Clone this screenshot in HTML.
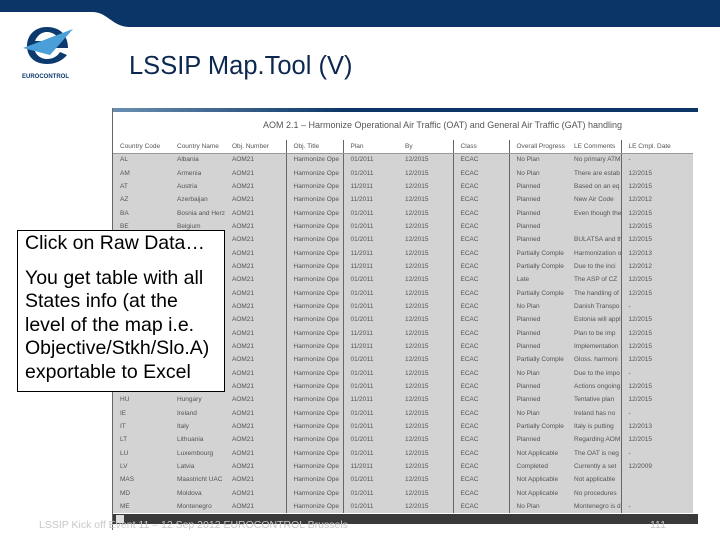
<!DOCTYPE html>
<html><head><meta charset="utf-8"><style>
*{margin:0;padding:0;box-sizing:border-box}
body{width:720px;height:540px;position:relative;overflow:hidden;background:#fff;font-family:"Liberation Sans",sans-serif}
.abs{position:absolute}
#shot{left:112px;top:108px;width:585px;height:422px;background:#fff;border-left:1px solid #666}
table{border-collapse:collapse;position:absolute;left:0;top:32px;width:580px;font-size:6.5px;color:#555;table-layout:fixed}
td{height:13.35px;padding:0 0 0 7px;white-space:nowrap;overflow:hidden;background:#d3d3d3}
tr.h td{background:#fff;height:13px;border-bottom:1px solid #999}
td.b{border-left:1px solid #666}
</style></head><body>
<svg class="abs" style="left:0;top:0" width="720" height="30">
<path d="M0 0H720V27H130C112 27 108 12 92 12H0Z" fill="#0a3566"/>
</svg>
<svg class="abs" style="left:20px;top:25px" width="60" height="60">
<path d="M27 2C14 2 7 11 7 21C7 32 15 39 27 39C35 39 42 36 47 30L40 27C37 32 32 34 27 34C20 34 15 29 14 23H48C48 10 40 2 27 2ZM15 16C17 11 21 7 27 7C33 7 38 11 40 16Z" fill="#0d3a6e"/>
<path d="M3 23L53 4L30 30Z" fill="#4a9fd8"/>
<text x="2" y="53" font-size="6" font-weight="bold" fill="#0d3a6e" font-family="Liberation Sans">EUROCONTROL</text>
</svg>
<div class="abs" style="left:129px;top:52px;font-size:25.5px;color:#0d2850">LSSIP Map.Tool (V)</div>
<div class="abs" id="shot">
<div class="abs" style="left:0;top:0;width:585px;height:4px;background:linear-gradient(90deg,#6a8fb0,#0a3566 40%)"></div>
<div class="abs" style="left:150px;top:12px;font-size:9px;color:#555;white-space:nowrap">AOM 2.1 – Harmonize Operational Air Traffic (OAT) and General Air Traffic (GAT) handling</div>
<table>
<colgroup><col style="width:57px"><col style="width:55px"><col style="width:61px"><col style="width:57px"><col style="width:55px"><col style="width:55px"><col style="width:56px"><col style="width:58px"><col style="width:54px"><col style="width:72px"></colgroup>
<tr class="h"><td>Country Code</td><td>Country Name</td><td>Obj. Number</td><td class="b">Obj. Title</td><td class="b">Plan</td><td>By</td><td class="b">Class</td><td class="b">Overall Progress</td><td>LE Comments</td><td class="b">LE Cmpl. Date</td></tr>
<tr><td>AL</td><td>Albania</td><td>AOM21</td><td class="b">Harmonize Ope</td><td class="b">01/2011</td><td>12/2015</td><td class="b">ECAC</td><td class="b">No Plan</td><td>No primary ATM</td><td class="b">-</td></tr>
<tr><td>AM</td><td>Armenia</td><td>AOM21</td><td class="b">Harmonize Ope</td><td class="b">01/2011</td><td>12/2015</td><td class="b">ECAC</td><td class="b">No Plan</td><td>There are estab</td><td class="b">12/2015</td></tr>
<tr><td>AT</td><td>Austria</td><td>AOM21</td><td class="b">Harmonize Ope</td><td class="b">11/2011</td><td>12/2015</td><td class="b">ECAC</td><td class="b">Planned</td><td>Based on an eq</td><td class="b">12/2015</td></tr>
<tr><td>AZ</td><td>Azerbaijan</td><td>AOM21</td><td class="b">Harmonize Ope</td><td class="b">11/2011</td><td>12/2015</td><td class="b">ECAC</td><td class="b">Planned</td><td>New Air Code</td><td class="b">12/2012</td></tr>
<tr><td>BA</td><td>Bosnia and Herz</td><td>AOM21</td><td class="b">Harmonize Ope</td><td class="b">01/2011</td><td>12/2015</td><td class="b">ECAC</td><td class="b">Planned</td><td>Even though the</td><td class="b">12/2015</td></tr>
<tr><td>BE</td><td>Belgium</td><td>AOM21</td><td class="b">Harmonize Ope</td><td class="b">01/2011</td><td>12/2015</td><td class="b">ECAC</td><td class="b">Planned</td><td></td><td class="b">12/2015</td></tr>
<tr><td>BG</td><td>Bulgaria</td><td>AOM21</td><td class="b">Harmonize Ope</td><td class="b">01/2011</td><td>12/2015</td><td class="b">ECAC</td><td class="b">Planned</td><td>BULATSA and th</td><td class="b">12/2015</td></tr>
<tr><td>CH</td><td>Switzerland</td><td>AOM21</td><td class="b">Harmonize Ope</td><td class="b">11/2011</td><td>12/2015</td><td class="b">ECAC</td><td class="b">Partially Comple</td><td>Harmonization o</td><td class="b">12/2013</td></tr>
<tr><td>CY</td><td>Cyprus</td><td>AOM21</td><td class="b">Harmonize Ope</td><td class="b">11/2011</td><td>12/2015</td><td class="b">ECAC</td><td class="b">Partially Comple</td><td>Due to the inci</td><td class="b">12/2012</td></tr>
<tr><td>CZ</td><td>Czech Republic</td><td>AOM21</td><td class="b">Harmonize Ope</td><td class="b">01/2011</td><td>12/2015</td><td class="b">ECAC</td><td class="b">Late</td><td>The ASP of CZ</td><td class="b">12/2015</td></tr>
<tr><td>DE</td><td>Germany</td><td>AOM21</td><td class="b">Harmonize Ope</td><td class="b">01/2011</td><td>12/2015</td><td class="b">ECAC</td><td class="b">Partially Comple</td><td>The handling of</td><td class="b">12/2015</td></tr>
<tr><td>DK</td><td>Denmark</td><td>AOM21</td><td class="b">Harmonize Ope</td><td class="b">01/2011</td><td>12/2015</td><td class="b">ECAC</td><td class="b">No Plan</td><td>Danish Transpo</td><td class="b">-</td></tr>
<tr><td>EE</td><td>Estonia</td><td>AOM21</td><td class="b">Harmonize Ope</td><td class="b">01/2011</td><td>12/2015</td><td class="b">ECAC</td><td class="b">Planned</td><td>Estonia will appl</td><td class="b">12/2015</td></tr>
<tr><td>ES</td><td>Spain</td><td>AOM21</td><td class="b">Harmonize Ope</td><td class="b">11/2011</td><td>12/2015</td><td class="b">ECAC</td><td class="b">Planned</td><td>Plan to be imp</td><td class="b">12/2015</td></tr>
<tr><td>FI</td><td>Finland</td><td>AOM21</td><td class="b">Harmonize Ope</td><td class="b">11/2011</td><td>12/2015</td><td class="b">ECAC</td><td class="b">Planned</td><td>Implementation</td><td class="b">12/2015</td></tr>
<tr><td>FR</td><td>France</td><td>AOM21</td><td class="b">Harmonize Ope</td><td class="b">01/2011</td><td>12/2015</td><td class="b">ECAC</td><td class="b">Partially Comple</td><td>Gloss. harmoni</td><td class="b">12/2015</td></tr>
<tr><td>GR</td><td>Greece</td><td>AOM21</td><td class="b">Harmonize Ope</td><td class="b">01/2011</td><td>12/2015</td><td class="b">ECAC</td><td class="b">No Plan</td><td>Due to the impo</td><td class="b">-</td></tr>
<tr><td>HR</td><td>Croatia</td><td>AOM21</td><td class="b">Harmonize Ope</td><td class="b">01/2011</td><td>12/2015</td><td class="b">ECAC</td><td class="b">Planned</td><td>Actions ongoing</td><td class="b">12/2015</td></tr>
<tr><td>HU</td><td>Hungary</td><td>AOM21</td><td class="b">Harmonize Ope</td><td class="b">11/2011</td><td>12/2015</td><td class="b">ECAC</td><td class="b">Planned</td><td>Tentative plan</td><td class="b">12/2015</td></tr>
<tr><td>IE</td><td>Ireland</td><td>AOM21</td><td class="b">Harmonize Ope</td><td class="b">01/2011</td><td>12/2015</td><td class="b">ECAC</td><td class="b">No Plan</td><td>Ireland has no</td><td class="b">-</td></tr>
<tr><td>IT</td><td>Italy</td><td>AOM21</td><td class="b">Harmonize Ope</td><td class="b">01/2011</td><td>12/2015</td><td class="b">ECAC</td><td class="b">Partially Comple</td><td>Italy is putting</td><td class="b">12/2013</td></tr>
<tr><td>LT</td><td>Lithuania</td><td>AOM21</td><td class="b">Harmonize Ope</td><td class="b">01/2011</td><td>12/2015</td><td class="b">ECAC</td><td class="b">Planned</td><td>Regarding AOM</td><td class="b">12/2015</td></tr>
<tr><td>LU</td><td>Luxembourg</td><td>AOM21</td><td class="b">Harmonize Ope</td><td class="b">01/2011</td><td>12/2015</td><td class="b">ECAC</td><td class="b">Not Applicable</td><td>The OAT is neg</td><td class="b">-</td></tr>
<tr><td>LV</td><td>Latvia</td><td>AOM21</td><td class="b">Harmonize Ope</td><td class="b">11/2011</td><td>12/2015</td><td class="b">ECAC</td><td class="b">Completed</td><td>Currently a set</td><td class="b">12/2009</td></tr>
<tr><td>MAS</td><td>Maastricht UAC</td><td>AOM21</td><td class="b">Harmonize Ope</td><td class="b">01/2011</td><td>12/2015</td><td class="b">ECAC</td><td class="b">Not Applicable</td><td>Not applicable</td><td class="b"></td></tr>
<tr><td>MD</td><td>Moldova</td><td>AOM21</td><td class="b">Harmonize Ope</td><td class="b">01/2011</td><td>12/2015</td><td class="b">ECAC</td><td class="b">Not Applicable</td><td>No procedures</td><td class="b"></td></tr>
<tr><td>ME</td><td>Montenegro</td><td>AOM21</td><td class="b">Harmonize Ope</td><td class="b">01/2011</td><td>12/2015</td><td class="b">ECAC</td><td class="b">No Plan</td><td>Montenegro is d</td><td class="b">-</td></tr>
</table>
<div class="abs" style="left:0;top:406px;width:585px;height:10px;background:#3a3a3a"></div>
<div class="abs" style="left:3px;top:407px;width:8px;height:8px;background:#ddd"></div>
</div>
<div class="abs" style="left:17px;top:230px;width:208px;height:162px;background:#fff;border:1px solid #000;padding:1px 4px 2px 7px;font-size:19.5px;line-height:23.5px;color:#000"><div style="white-space:nowrap">Click on Raw Data…</div><div style="height:11px"></div>You get table with all States info (at the level of the map i.e. Objective/Stkh/Slo.A) exportable to Excel</div>
<div class="abs" style="left:39px;top:519px;font-size:10.5px;color:#c8c8c8;white-space:nowrap">LSSIP Kick off Event 11 – 12 Sep 2012 EUROCONTROL Brussels</div>
<div class="abs" style="left:650px;top:519px;font-size:10.5px;color:#c8c8c8">111</div>
</body></html>
